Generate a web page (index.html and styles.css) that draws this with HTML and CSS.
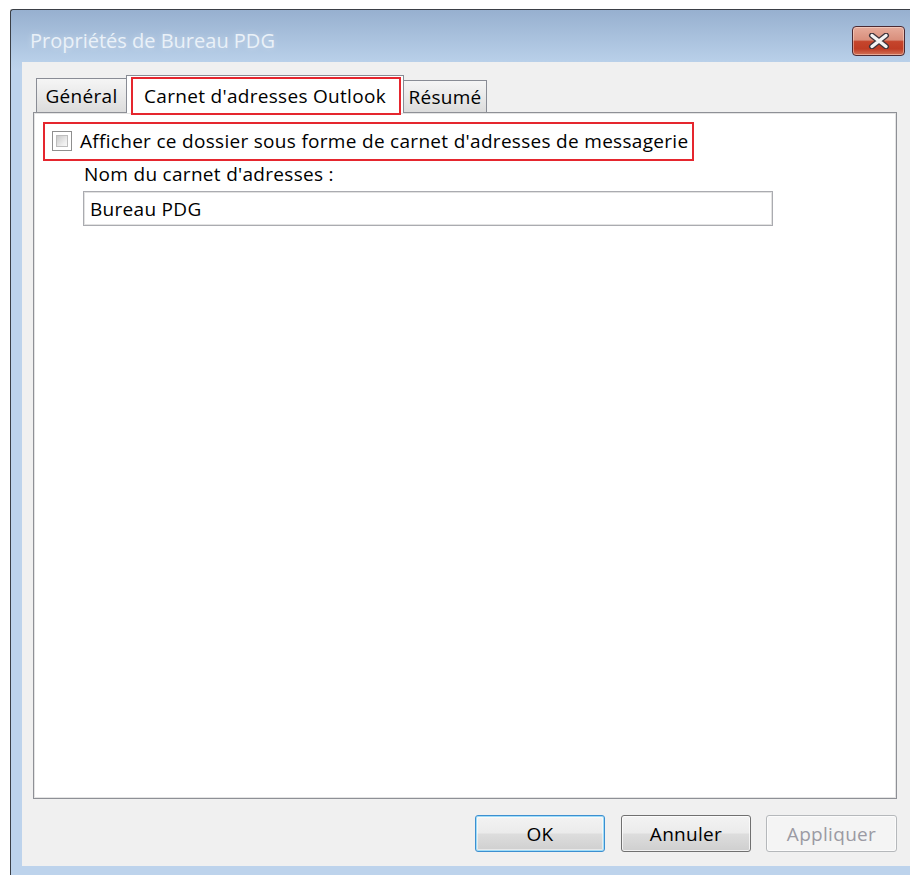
FILE: index.html
```html
<!DOCTYPE html>
<html lang="fr">
<head>
<meta charset="utf-8">
<title>Propriétés de Bureau PDG</title>
<link rel="stylesheet" href="styles.css">
</head>
<body>
<div class="window">
  <div class="titlebar">
    <span class="title">Propriétés de Bureau PDG</span>
    <button class="close" type="button" aria-label="Fermer">
      <svg width="22" height="16" viewBox="0 0 22 16">
        <path d="M4 2.5 L18 13.5 M18 2.5 L4 13.5" stroke="#3e343b" stroke-width="6" stroke-linecap="round" fill="none"/>
        <path d="M4 2.5 L18 13.5 M18 2.5 L4 13.5" stroke="#f4f4f4" stroke-width="3.4" stroke-linecap="round" fill="none"/>
      </svg>
    </button>
  </div>
  <div class="client">
    <div class="tabs">
      <div class="tab tab-general">Général</div>
      <div class="tab tab-active">Carnet d'adresses Outlook<span class="mark"></span></div>
      <div class="tab tab-summary">Résumé</div>
    </div>
    <div class="panel">
      <label class="check-row">
        <span class="checkbox"></span>
        <span class="check-text">Afficher ce dossier sous forme de carnet d'adresses de messagerie</span>
      </label>
      <div class="field-label">Nom du carnet d'adresses :</div>
      <div class="textbox">Bureau PDG</div>
    </div>
    <div class="buttons">
      <button class="btn btn-default" type="button">OK</button>
      <button class="btn" type="button">Annuler</button>
      <button class="btn" type="button" disabled>Appliquer</button>
    </div>
  </div>
</div>
</body>
</html>
```
FILE: styles.css
```css
html, body {
  margin: 0;
  height: 100%;
  overflow: hidden;
  background: #ffffff;
}

body {
  font-family: "Open Sans", "Noto Sans", sans-serif;
  font-size: 19px;
  letter-spacing: 0.3px;
  color: #000;
}

/* window frame */
.window {
  box-sizing: border-box;
  margin: 9px 0 0 10px;
  width: 923px;
  height: 880px;
  border-left: 1px solid #3b3f46;
  border-top: 1px solid #3b3f46;
  border-top-left-radius: 3px;
  background: linear-gradient(#97b0cf, #b9d0e9 52px, #bdd3ec 60px, #bdd3ec);
  display: flex;
  flex-direction: column;
}

.titlebar {
  height: 52px;
  display: flex;
  align-items: flex-start;
  flex-shrink: 0;
}

.title {
  flex: 1;
  padding: 18px 0 0 19px;
  font-size: 20px;
  letter-spacing: 0;
  line-height: 26px;
  color: #eaf1f8;
  text-shadow: 0 0 6px rgba(255, 255, 255, 0.35);
}

.close {
  box-sizing: border-box;
  margin: 16px 28px 0 0;
  width: 53px;
  height: 30px;
  padding: 0;
  border: 1px solid #4b2a33;
  border-radius: 4px;
  background: linear-gradient(#e6ab9b 0%, #d98f7c 46%, #c5452c 52%, #bf3c24 78%, #d27358 100%);
  box-shadow: inset 0 0 0 1px rgba(255, 235, 225, 0.45);
  display: flex;
  align-items: center;
  justify-content: center;
}

/* client area */
.client {
  box-sizing: border-box;
  margin-left: 11px;
  width: 900px;
  height: 804px;
  flex-shrink: 0;
  background: #f0f0f0;
  padding: 13px 0 0 11px;
}

.tabs {
  display: flex;
  align-items: flex-end;
  margin-left: 3px;
  height: 37px;
}

.tab {
  box-sizing: border-box;
  position: relative;
  border: 1px solid #898c95;
  border-bottom: none;
  background: linear-gradient(#f5f5f5, #e9e9e9 50%, #dcdcdc);
  display: flex;
  align-items: center;
  justify-content: center;
  white-space: nowrap;
  line-height: 22px;
}

.tab-general {
  width: 91px;
  height: 34px;
}

.tab-active {
  z-index: 2;
  width: 278px;
  height: 38px;
  margin: 0 0 -1px -1px;
  padding-top: 2px;
  background: #ffffff;
}

.tab-summary {
  width: 84px;
  height: 32px;
  margin-left: -1px;
}

.mark {
  position: absolute;
  left: 4px;
  right: 2px;
  top: 1px;
  bottom: -2px;
  border: 2px solid #e5262e;
}

.panel {
  position: relative;
  z-index: 1;
  box-sizing: border-box;
  width: 864px;
  height: 687px;
  border: 1px solid #8e9096;
  background: #ffffff;
  box-shadow: inset 0 0 0 1px #e4e4e4;
  padding: 9px 0 0 9px;
}

.check-row {
  box-sizing: border-box;
  width: 651px;
  height: 39px;
  border: 2px solid #e5262e;
  padding: 0 0 1px 7px;
  display: flex;
  align-items: center;
  gap: 8px;
  line-height: 22px;
  white-space: nowrap;
}

.checkbox {
  box-sizing: border-box;
  width: 20px;
  height: 20px;
  flex-shrink: 0;
  border: 1px solid #8f8f8f;
  background: #ffffff;
  padding: 3px;
}

.checkbox::after {
  content: "";
  display: block;
  box-sizing: border-box;
  width: 100%;
  height: 100%;
  border: 1px solid #bdbdbd;
  background: linear-gradient(135deg, #c9c9c9, #eeeeee 70%, #f8f8f8);
}

.field-label {
  margin: 2px 0 0 41px;
  line-height: 22px;
}

.textbox {
  box-sizing: border-box;
  margin: 6px 0 0 40px;
  width: 690px;
  height: 35px;
  border: 1px solid #aaabb0;
  box-shadow: inset 0 0 0 1px #e2e2e2;
  padding: 0 0 0 6px;
  display: flex;
  align-items: center;
  line-height: 22px;
}

/* dialog buttons */
.buttons {
  width: 864px;
  margin-top: 16px;
  display: flex;
  justify-content: flex-end;
  gap: 16px;
}

.btn {
  box-sizing: border-box;
  width: 130px;
  height: 37px;
  padding: 0;
  font-family: inherit;
  font-size: 19px;
  letter-spacing: 0.3px;
  color: #000;
  border: 1px solid #707070;
  border-radius: 3px;
  background: linear-gradient(#f3f3f3, #ebebeb 48%, #dddddd 52%, #cfcfcf);
  box-shadow: inset 0 0 0 1px rgba(255, 255, 255, 0.7);
}

.btn-default {
  border-color: #3c8fd0;
  box-shadow: inset 0 0 0 1px #9fdcf8, inset 0 0 0 2px rgba(255, 255, 255, 0.5);
}

.btn:last-child {
  margin-left: -1px;
  width: 131px;
}

.btn:disabled {
  color: #9b9aa3;
  border-color: #b5b8bb;
  background: #f4f4f4;
  box-shadow: inset 0 0 0 1px #fbfbfb;
}
```
